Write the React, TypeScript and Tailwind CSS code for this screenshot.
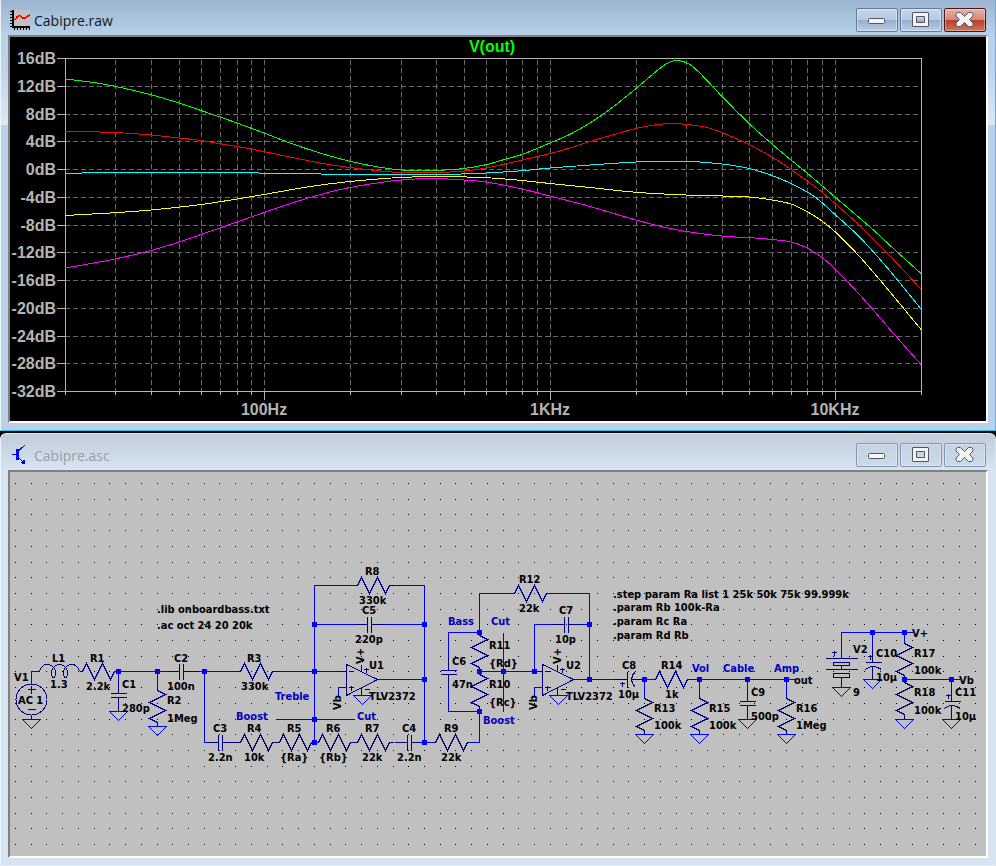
import React from "react";

type Point = [number, number];

/* ---------- Window chrome ---------- */

function MinimizeGlyph() {
  return (
    <svg viewBox="1 0 20 16" className="h-4 w-5" aria-hidden="true">
      <rect x="2.500" y="6.500" width="16" height="5" rx="1" fill="#f6f6f6" stroke="#535666" />
    </svg>
  );
}

function MaximizeGlyph() {
  return (
    <svg viewBox="1 0 20 16" className="h-4 w-5" aria-hidden="true">
      <path
        d="M3 .5h15q.5 0 .5.5v13q0 .5-.5.5H3q-.5 0-.5-.5V1q0-.5.5-.5zM6.500 4.500v6h8v-6z"
        fill="#f3f3f3"
        fillRule="evenodd"
        stroke="#535666"
      />
    </svg>
  );
}

function CloseGlyph() {
  return (
    <svg viewBox="1 0 20 16" className="h-4 w-5" aria-hidden="true">
      <path
        d="M3.500 .5h3l4 4 4-4h3l1.500 1.500v2L15.500 7.500l3.500 3.500v2l-1.500 1.500h-3l-4-4-4 4h-3L2 13v-2l3.500-3.500L2 4V2z"
        fill="#f3f3f3"
        stroke="#535666"
        strokeLinejoin="round"
      />
    </svg>
  );
}

const plainActive =
  "border-[#62779a] bg-[linear-gradient(to_bottom,#c6d8ea_0%,#b5cae0_48%,#96aecb_50%,#b9cfe6_100%)] shadow-[inset_0_0_0_1px_rgba(255,255,255,0.45)]";
const closeActive =
  "border-[#451522] bg-[linear-gradient(to_bottom,#e9b1a8_0%,#d98877_48%,#b63d26_50%,#cf7558_100%)] shadow-[inset_0_0_0_1px_rgba(255,255,255,0.35)]";
const plainIdle =
  "border-[#8396b3] bg-[linear-gradient(to_bottom,#c4d2e1,#cbdaea)] shadow-[inset_0_0_0_1px_rgba(255,255,255,0.35)]";

function TitleBar(props: { title: string; active: boolean; icon: React.ReactNode; className: string }) {
  const base = "flex h-6 w-[42px] items-center justify-center rounded-[2px] border ";
  const plain = base + (props.active ? plainActive : plainIdle);
  return (
    <header className={"flex items-center justify-between pr-0.5 " + props.className}>
      <div className="flex items-center gap-1 pl-0.5">
        {props.icon}
        <h1
          className={
            "pt-0.5 font-['Open_Sans','Noto_Sans',sans-serif] text-sm leading-5 " +
            (props.active ? "text-[#101820]" : "text-[#9a9da3]")
          }
        >
          {props.title}
        </h1>
      </div>
      <div className="flex gap-0.5">
        <button type="button" aria-label="Minimize" className={plain}>
          <MinimizeGlyph />
        </button>
        <button type="button" aria-label="Maximize" className={plain}>
          <MaximizeGlyph />
        </button>
        <button type="button" aria-label="Close" className={base + (props.active ? closeActive : plainIdle)}>
          <CloseGlyph />
        </button>
      </div>
    </header>
  );
}

function WaveIcon() {
  return (
    <svg viewBox="0 0 20 20" className="size-5" shapeRendering="crispEdges" aria-hidden="true">
      <rect x="3" width="17" height="20" fill="#c0c0c0" />
      <path d="M3 0v17M2 16.500H20" stroke="#000" strokeWidth="2" fill="none" />
      <path
        d="M0 1.500h3M0 4.500h3M0 7.500h3M0 10.500h3M0 13.500h3M0 16.500h3M4.500 17v3M7.500 17v3M10.500 17v3M13.500 17v3M16.500 17v3M19.500 17v3"
        stroke="#000"
      />
      <path d="M4.500 10.500L7 7l2.500-1.500 3 2.500h3L20 4.500" stroke="#f00" strokeWidth="1.500" fill="none" />
    </svg>
  );
}

function TransistorIcon() {
  return (
    <svg viewBox="0 0 20 20" className="size-5" shapeRendering="crispEdges" aria-hidden="true">
      <path d="M6 4h3v11H6z" fill="#00f" />
      <path d="M2 9.500h4M9 5.500l3-3 3-2M9 13l5 5" stroke="#00f" fill="none" />
      <path d="M15.500 19.500l-1-5-4 3.500z" fill="#00f" />
    </svg>
  );
}

/* ---------- Frequency response plot ---------- */

const X0 = 65;
const DECADE = 285.33;
const freqX = (f: number) => Math.round(X0 + DECADE * Math.log10(f / 20)) + 0.5;
const levelY = (i: number) => Math.floor(58.5 + i * 27.75) + 0.5;

const frequencies = [
  30, 40, 50, 60, 70, 80, 90, 100, 200, 300, 400, 500, 600, 700, 800, 900, 1000, 2000, 3000, 4000, 5000, 6000, 7000,
  8000, 9000, 10000,
];
const levels = [16, 12, 8, 4, 0, -4, -8, -12, -16, -20, -24, -28, -32];

const traces: { color: string; points: Point[] }[] = [
  {
    color: "#00ff00",
    points: [
      [65, 79], [90, 82], [115, 86.3], [151, 94.7], [179, 103], [201, 110.5], [220, 117], [237, 123], [264, 133],
      [290, 143], [320, 153], [350, 161.3], [380, 167.3], [401, 170], [421, 171], [440, 170.3], [464, 168.5],
      [486, 164.7], [506, 159], [522, 154.5], [550, 143], [570, 134.3], [590, 123], [611, 108.5], [636, 88.5],
      [650, 76.5], [663, 66], [670, 62], [677, 60.5], [686, 62.5], [695, 68.5], [707, 80.5], [722, 96.5], [749, 123.5],
      [772, 144], [791, 160], [807, 173], [835, 197], [870, 227], [895, 250], [921, 273.5],
    ],
  },
  {
    color: "#ff0000",
    points: [
      [65, 131.3], [115, 132.5], [151, 135], [179, 138], [201, 140.5], [220, 143.7], [251, 149], [290, 157], [320, 163],
      [350, 167.5], [380, 171], [400, 172.4], [440, 172.4], [464, 171], [486, 168], [522, 160], [550, 153.5],
      [570, 148], [590, 141.5], [636, 128.5], [655, 124.8], [673, 123.6], [690, 124.8], [707, 127.5], [722, 132.5],
      [749, 144.5], [772, 157], [791, 169.5], [820, 190.5], [835, 203.5], [860, 226], [887, 253], [921, 289],
    ],
  },
  {
    color: "#00ffff",
    points: [
      [65, 173.4], [110, 172.5], [230, 172.6], [310, 173.8], [350, 174.5], [440, 174.5], [486, 173], [522, 170.7],
      [550, 168], [590, 165], [636, 162], [660, 161.4], [690, 161.4], [722, 164], [749, 168.5], [772, 175.5],
      [791, 183.5], [815, 197], [835, 214.5], [860, 237.5], [890, 271], [921, 309],
    ],
  },
  {
    color: "#ffff00",
    points: [
      [65, 215.5], [115, 212.7], [151, 210], [201, 204.5], [237, 199], [264, 194.5], [310, 186.5], [350, 181.5],
      [400, 177.5], [440, 176.6], [486, 177.7], [522, 180.5], [550, 183.5], [590, 187.5], [636, 192.3], [686, 195],
      [749, 197], [772, 200], [791, 204], [807, 211.5], [822, 221], [835, 231.7], [860, 257], [890, 292], [921, 329.5],
    ],
  },
  {
    color: "#ff00ff",
    points: [
      [65, 268], [80, 265.5], [115, 259], [151, 250.5], [179, 242], [201, 234.5], [237, 222], [264, 212.5], [295, 202],
      [330, 192], [350, 187.5], [380, 182.5], [401, 180], [430, 178.4], [464, 180], [486, 182], [522, 189], [550, 196],
      [590, 206.5], [636, 220], [670, 228.5], [700, 233.5], [730, 236.7], [749, 237.6], [772, 239.5], [791, 242],
      [807, 248], [822, 257.5], [835, 269], [860, 295], [890, 329.5], [921, 364.5],
    ],
  },
];

/* Catmull-Rom spline through the sample points */
function smooth(p: Point[]) {
  let d = `M${p[0][0]} ${p[0][1]}`;
  for (let i = 0; i < p.length - 1; i++) {
    const a = p[Math.max(i - 1, 0)];
    const b = p[i];
    const c = p[i + 1];
    const e = p[Math.min(i + 2, p.length - 1)];
    const h = (c[0] - b[0]) / 3;
    const m1 = (c[1] - a[1]) / (c[0] - a[0]);
    const m2 = (e[1] - b[1]) / (e[0] - b[0]);
    d += `C${b[0] + h} ${b[1] + m1 * h} ${c[0] - h} ${c[1] - m2 * h} ${c[0]} ${c[1]}`;
  }
  return d;
}

function ResponsePlot() {
  return (
    <svg
      viewBox="10 37 976 384"
      role="img"
      aria-label="Frequency response of V(out)"
      className="block h-auto w-full bg-black font-['Liberation_Sans',Arial,sans-serif] text-base font-bold"
    >
      <g shapeRendering="crispEdges" fill="none">
        <g stroke="#6a6a6a" strokeDasharray="5 3">
          {levels.slice(1, -1).map((db, i) => (
            <path key={db} d={`M65 ${levelY(i + 1)}H921`} />
          ))}
          {frequencies.map((f) => (
            <path key={f} d={`M${freqX(f)} 60V391`} />
          ))}
        </g>
        <g stroke="#b4b4b4">
          <rect x="65.500" y="58.500" width="856" height="333" />
          {levels.map((db, i) => (
            <path key={db} d={`M57 ${levelY(i)}h8`} />
          ))}
          <path d="M65.500 391v4M921.500 391v4" />
          {frequencies.map((f) => (
            <path key={f} d={`M${freqX(f)} 391v${[100, 1000, 10000].includes(f) ? 9 : 4}`} />
          ))}
        </g>
        {traces.map((t) => (
          <path key={t.color} d={smooth(t.points)} stroke={t.color} />
        ))}
      </g>
      <text x="492" y="52" textAnchor="middle" fill="#00ff00">
        V(out)
      </text>
      <g fill="#b4b4b4" textAnchor="end">
        {levels.map((db, i) => (
          <text key={db} x="56" y={Math.floor(levelY(i)) + 6}>
            {db}dB
          </text>
        ))}
      </g>
      <g fill="#b4b4b4" textAnchor="middle">
        <text x="264" y="415">100Hz</text>
        <text x="550" y="415">1KHz</text>
        <text x="835" y="415">10KHz</text>
      </g>
    </svg>
  );
}

/* ---------- Schematic ---------- */

const rows = Array.from({ length: 24 }, (_, i) => Math.round(483 + i * 15.7));
const cols = Array.from({ length: 62 }, (_, i) => Math.round(15 + i * 15.73));

const hResistors: Point[] = [
  [79, 671], [237, 671], [354, 585], [237, 742], [276, 742], [315, 742], [354, 742], [432, 742], [511, 593], [652, 679],
];
const vResistors: Point[] = [
  [157, 687], [479, 632], [479, 671], [644, 695], [699, 695], [786, 695], [904, 640], [904, 679],
];
const hCaps: Point[] = [[166, 671], [205, 742], [394, 742], [354, 624], [551, 624]];
const vCaps: Point[] = [[118, 679], [448, 656], [747, 687]];
const grounds: Point[] = [
  [31, 719], [118, 711], [157, 726], [362, 695], [558, 695], [644, 734], [699, 734], [747, 719], [786, 734],
  [841, 687], [872, 679], [904, 719], [951, 719],
];
const junctions: Point[] = [
  [118, 671], [157, 671], [204, 671], [314, 624], [314, 671], [314, 719], [314, 742], [424, 624], [424, 679],
  [424, 742], [479, 632], [479, 671], [479, 711], [503, 671], [534, 671], [589, 624], [589, 679], [644, 679],
  [699, 679], [747, 679], [786, 679], [872, 632], [904, 632], [904, 679], [951, 679],
];
const opAmps: Point[] = [[346, 679], [542, 679]];

const wires = [
  "M31 683V671H39", "M118 671H166M197 671H237M276 671H340M118 671V680M157 671V687",
  "M204 671V742H207", "M314 742V585H354M393 585H424V742M314 624H354M385 624H424",
  "M275 719H354", "M377 679H424M424 742H432M471 742H479V711M338 696V687H346",
  "M479 632V593H511M550 593H589V679M479 632H448V656M448 687V711H479M503 632V711",
  "M479 671H536M534 671V624H551M582 624H589M534 696V687H542",
  "M574 679H613M642 679H652M691 679H794M644 679V695M699 679V695M747 679V688M786 679V695",
  "M841 658V632H912M872 632V648M904 632V640M904 679H959M951 679V688",
];

const labels: [string, number, number][] = [
  [".lib onboardbass.txt", 157, 613], [".ac oct 24 20 20k", 157, 629],
  ["V1", 14, 681], ["AC 1", 18, 704], ["L1", 52, 662], ["1.3", 50, 688], ["R1", 90, 662], ["2.2k", 86, 690],
  ["C1", 122, 688], ["280p", 122, 712], ["C2", 174, 662], ["100n", 167, 690], ["R2", 167, 704], ["1Meg", 167, 722],
  ["R3", 247, 662], ["330k", 241, 690], ["C3", 213, 732], ["2.2n", 208, 761], ["R4", 247, 732], ["10k", 244, 761],
  ["R5", 287, 732], ["{Ra}", 280, 761], ["R6", 326, 732], ["{Rb}", 319, 761], ["R7", 365, 732], ["22k", 362, 761],
  ["C4", 402, 732], ["2.2n", 397, 761], ["R8", 365, 575], ["330k", 359, 604], ["C5", 362, 614], ["220p", 355, 643],
  ["U1", 369, 669], ["TLV2372", 369, 700], ["R9", 444, 732], ["22k", 441, 761], ["R12", 519, 583], ["22k", 519, 612],
  ["C7", 559, 614], ["10p", 555, 643], ["R11", 489, 649], ["{Rd}", 489, 667], ["R10", 489, 688], ["{Rc}", 489, 706],
  ["C6", 452, 665], ["47n", 452, 688], ["U2", 566, 669], ["TLV2372", 566, 700],
  [".step param Ra list 1 25k 50k 75k 99.999k", 613, 598], [".param Rb 100k-Ra", 613, 611],
  [".param Rc Ra", 613, 625], [".param Rd Rb", 613, 639],
  ["C8", 622, 669], ["10µ", 618, 698], ["R14", 661, 669], ["1k", 665, 698], ["R13", 654, 712], ["100k", 654, 729],
  ["R15", 709, 712], ["100k", 709, 729], ["C9", 751, 696], ["500p", 751, 720], ["R16", 796, 712], ["1Meg", 796, 729],
  ["out", 794, 684], ["V2", 853, 653], ["9", 853, 696], ["C10", 876, 657], ["10µ", 876, 681], ["V+", 912, 637],
  ["R17", 914, 657], ["100k", 914, 674], ["R18", 914, 696], ["100k", 914, 714], ["Vb", 959, 684], ["C11", 955, 696],
  ["10µ", 955, 720],
];

const notes: [string, number, number][] = [
  ["Treble", 275, 700], ["Boost", 236, 720], ["Cut", 357, 720], ["Bass", 448, 625], ["Cut", 491, 625],
  ["Boost", 483, 724], ["Vol", 692, 672], ["Cable", 723, 672], ["Amp", 774, 672],
];

function Schematic() {
  return (
    <svg
      viewBox="10 472 976 384"
      role="img"
      aria-label="Preamplifier schematic"
      className="block h-auto w-full bg-[#c0c0c0] font-['DejaVu_Sans_Condensed','Noto_Sans',sans-serif] text-[11px] font-bold"
    >
      <g shapeRendering="crispEdges">
        {rows.map((y) => (
          <path key={y} d={cols.map((x) => `M${x} ${y}h1v1h-1z`).join("")} fill="#000" />
        ))}
      </g>
      {/* Symbols are centred on pixel columns and rows */}
      <g transform="translate(.5 .5)" fill="none" shapeRendering="crispEdges">
        <g stroke="#000080">
          {hResistors.map(([x, y]) => (
            <path key={`${x} ${y}`} d={`M${x} ${y}h3l4 -8l8 16l8 -16l8 16l4 -8h4`} />
          ))}
          {vResistors.map(([x, y]) => (
            <path key={`${x} ${y}`} d={`M${x} ${y}v3l8 4l-16 8l16 8l-16 8l8 4v4`} />
          ))}
          {hCaps.map(([x, y]) => (
            <path key={`${x} ${y}`} d={`M${x} ${y}h13m4 0h15m-19 -8v16m4 -16v16`} />
          ))}
          {vCaps.map(([x, y]) => (
            <path key={`${x} ${y}`} d={`M${x} ${y}v14m0 4v14m-8 -18h16m-16 4h16`} />
          ))}
          {opAmps.map(([x, y]) => (
            <path
              key={x}
              d={`M${x} ${y - 15}v31l31 -16zM${x - 7} ${y - 8}h7m2 0h5m-5 16h5m-2 -2v5M${x + 15} ${y - 15}v7m0 16v8m2 -26h5m-2 -2v5m-2 17h5`}
            />
          ))}
          <path d="M39 671C40 667 43 664 46 664C52 664 55 668 55 673C55 678 51 678 51 673C51 668 54 664 59 664C64 664 67 668 67 673C67 678 63 678 63 673C63 668 66 664 71 664C75 664 78 667 79 671" />
          <circle cx="31" cy="699" r="15.500" />
          <path d="M31 714V719M27 689h8m-4 -4v8M27 709h8" />
          <path d="M613 679H627M627 671V687M635 671Q627 679 635 687M631 679H643M619 683h5m-2 -2v5" />
          <path d="M825 658H857M833 662h16v3h-16zM825 669H857M833 673h16v4h-16zM841 665V669M841 677V687M831 652h5m-2 -2v5" />
          <path d="M872 648V662M865 662h16M865 669Q872 663 881 669M872 666V679M867 656h5m-2 -2v5" />
          <path d="M951 688V701M944 701h16M944 708Q951 702 960 708M951 705V719M945 695h5m-2 -2v5" />
        </g>
        <g stroke="#0000ff">
          {wires.map((d) => (
            <path key={d} d={d} />
          ))}
          {grounds.map(([x, y]) => (
            <path key={`${x} ${y}`} d={`M${x - 9} ${y}h18l-9 9z`} />
          ))}
          {junctions.map(([x, y]) => (
            <rect key={`${x} ${y}`} x={x - 2} y={y - 2} width="4" height="4" fill="#0000ff" />
          ))}
        </g>
      </g>
      <g fill="#000">
        {labels.map(([s, x, y]) => (
          <text key={`${x} ${y}`} x={x} y={y}>
            {s}
          </text>
        ))}
        <text transform="translate(364 664) rotate(-90)">V+</text>
        <text transform="translate(341 710) rotate(-90)">Vb</text>
        <text transform="translate(561 664) rotate(-90)">V+</text>
        <text transform="translate(537 710) rotate(-90)">Vb</text>
      </g>
      <g fill="#0000c0">
        {notes.map(([s, x, y]) => (
          <text key={`${x} ${y}`} x={x} y={y}>
            {s}
          </text>
        ))}
      </g>
    </svg>
  );
}

export default function App() {
  return (
    <main className="flex flex-col gap-0.5 bg-black">
      <section
        aria-label="Cabipre.raw"
        className="border-b border-l border-r border-b-[#2bc8e6] border-l-[#eef4fb] border-r-[#2bc8e6] bg-[linear-gradient(to_bottom,#9ab4d1_0px,#b9d1ea_36px,#bed4ed_70px,#dce8f6_125px,#b9d1ea_125px)] px-[7px] pb-[7px]"
      >
        <TitleBar title="Cabipre.raw" active icon={<WaveIcon />} className="h-[35px] pt-1" />
        <div className="border-2 border-b-white border-l-[#808080] border-r-white border-t-[#808080]">
          <ResponsePlot />
        </div>
      </section>
      <section
        aria-label="Cabipre.asc"
        className="rounded-t-md border border-b-[#e8edf3] border-l-[#eef4fb] border-r-[#d7e4f2] border-t-[#dfe6ee] bg-[linear-gradient(to_bottom,#bfcddb_0px,#d7e4f2_36px)] px-[7px] pb-[7px]"
      >
        <TitleBar title="Cabipre.asc" active={false} icon={<TransistorIcon />} className="h-9 pt-1.5" />
        <div className="border-2 border-b-white border-l-[#808080] border-r-white border-t-[#808080]">
          <Schematic />
        </div>
      </section>
    </main>
  );
}
